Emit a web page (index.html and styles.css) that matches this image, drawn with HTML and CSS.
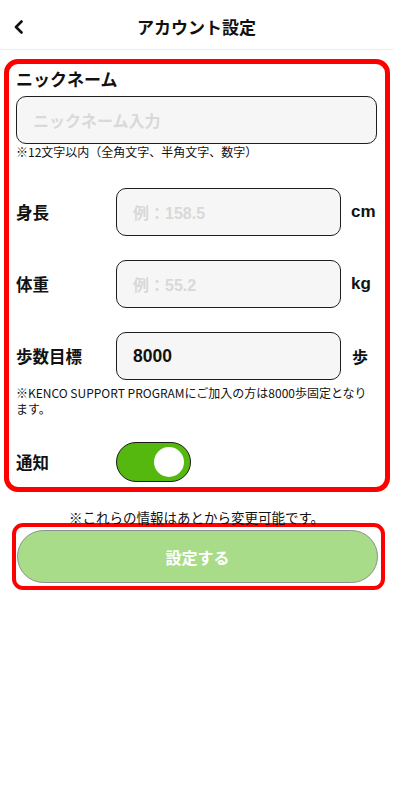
FILE: index.html
```html
<!DOCTYPE html>
<html lang="ja">
<head>
<meta charset="utf-8">
<meta name="viewport" content="width=device-width, initial-scale=1">
<title>アカウント設定</title>
<link rel="stylesheet" href="styles.css">
</head>
<body>
<header class="topbar">
  <button class="back" aria-label="戻る">
    <svg width="12" height="14" viewBox="0 0 12 14" aria-hidden="true">
      <path d="M8.5 1.5 L3 7 L8.5 12.5" fill="none" stroke="#111" stroke-width="2.6" stroke-linecap="round" stroke-linejoin="round"/>
    </svg>
  </button>
  <h1 class="title">アカウント設定</h1>
  <span class="spacer"></span>
</header>

<main class="page">
  <section class="form-box">
    <div class="field-nick">
      <label class="label">ニックネーム</label>
      <div class="input input-wide"><span class="ph">ニックネーム入力</span></div>
      <p class="note">※12文字以内（全角文字、半角文字、数字）</p>
    </div>

    <div class="rows">
      <div class="row">
        <span class="label row-label">身長</span>
        <div class="input input-mid"><span class="ph">例：158.5</span></div>
        <span class="unit">cm</span>
      </div>
      <div class="row">
        <span class="label row-label">体重</span>
        <div class="input input-mid"><span class="ph">例：55.2</span></div>
        <span class="unit">kg</span>
      </div>
      <div class="row">
        <span class="label row-label">歩数目標</span>
        <div class="input input-mid"><span class="val">8000</span></div>
        <span class="unit unit-jp">歩</span>
      </div>
    </div>
    <p class="note note-steps">※KENCO SUPPORT PROGRAMにご加入の方は8000歩固定となります。</p>

    <div class="row row-toggle">
      <span class="label row-label">通知</span>
      <span class="toggle"><span class="knob"></span></span>
    </div>
  </section>

  <p class="hint">※これらの情報はあとから変更可能です。</p>

  <div class="submit-box">
    <button class="submit">設定する</button>
  </div>
</main>
</body>
</html>
```

FILE: styles.css
```css
* { box-sizing: border-box; }

html, body {
  margin: 0;
  padding: 0;
  background: #ffffff;
}

body {
  width: 393px;
  min-height: 812px;
  font-family: "Liberation Sans", "Noto Sans CJK JP", sans-serif;
  color: #111111;
}

.topbar {
  height: 50px;
  border-bottom: 1px solid #ececec;
  display: grid;
  grid-template-columns: 44px 1fr 44px;
  align-items: center;
}

.back {
  border: 0;
  background: transparent;
  padding: 0 0 0 13px;
  margin: 0;
  height: 50px;
  display: flex;
  align-items: center;
  padding-top: 4px;
}

.title {
  margin: 0;
  text-align: center;
  font-family: "Noto Sans CJK JP", sans-serif;
  font-size: 17px;
  font-weight: 700;
  line-height: 24px;
  padding-top: 3px;
}

.page {
  padding-top: 9px;
}

.form-box {
  margin: 0 3px 0 4px;
  border: 5px solid #ff0000;
  border-radius: 14px;
  padding: 3px 8px 5px 7px;
}

.label {
  display: block;
  font-family: "Noto Sans CJK JP", sans-serif;
  font-weight: 700;
  font-size: 16.5px;
  line-height: 24px;
  color: #111;
}

.field-nick .label {
  font-size: 17px;
  margin-bottom: 5px;
}

.input {
  height: 48px;
  border: 1px solid #1e1e1e;
  border-radius: 10px;
  background: #f6f6f6;
  display: flex;
  align-items: center;
  padding-left: 16px;
}

.input-wide { width: 100%; }
.input-mid { width: 225px; }

.ph {
  font-family: "Liberation Sans", "Noto Sans CJK JP", sans-serif;
  font-weight: 700;
  font-size: 16px;
  color: #d9d9d9;
}

.input-wide .ph {
  font-family: "Noto Sans CJK JP", sans-serif;
}

.val {
  font-family: "Liberation Sans", sans-serif;
  font-weight: 700;
  font-size: 17.5px;
  color: #111;
}

.note {
  margin: 0;
  font-family: "Noto Sans CJK JP", sans-serif;
  font-size: 12px;
  line-height: 16px;
  color: #111;
}

.rows {
  margin-top: 28px;
  display: flex;
  flex-direction: column;
  gap: 24px;
}

.row {
  display: flex;
  align-items: center;
}

.row-label {
  width: 100px;
  flex: 0 0 100px;
}

.unit {
  margin-left: 10px;
  font-family: "Liberation Sans", sans-serif;
  font-weight: 700;
  font-size: 17px;
}

.unit-jp {
  font-family: "Noto Sans CJK JP", sans-serif;
  font-size: 16px;
  margin-left: 11px;
}

.note-steps {
  margin-top: 5px;
  line-height: 15.5px;
}

.row-toggle {
  margin-top: 26px;
}

.toggle {
  width: 75px;
  height: 40px;
  border-radius: 20px;
  background: #55b80f;
  border: 1.5px solid #1a1a1a;
  display: flex;
  align-items: center;
  justify-content: flex-end;
  padding-right: 6px;
}

.knob {
  width: 30px;
  height: 30px;
  border-radius: 50%;
  background: #ffffff;
}

.hint {
  margin: 19px 0 0;
  text-align: center;
  font-family: "Noto Sans CJK JP", sans-serif;
  font-size: 13.5px;
  line-height: 12px;
  color: #111;
}

.submit-box {
  margin: 0 0 0 12px;
  width: 373px;
  border: 4px solid #ff0000;
  border-radius: 11px;
  padding: 3px 3px 3px 1px;
}

.submit {
  display: block;
  width: 100%;
  height: 53px;
  border: 1px solid #8f8f8f;
  border-radius: 27px;
  background: #a9dc88;
  color: #ffffff;
  font-family: "Noto Sans CJK JP", sans-serif;
  font-weight: 700;
  font-size: 16px;
  padding: 0;
}
```
